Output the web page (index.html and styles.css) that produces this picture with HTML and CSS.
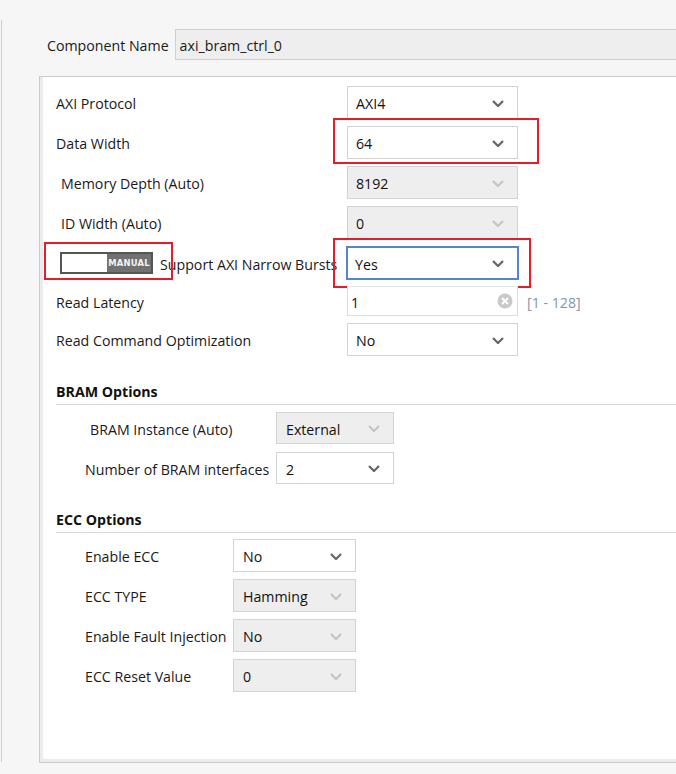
FILE: index.html
```html
<!DOCTYPE html>
<html>
<head>
<meta charset="utf-8">
<link rel="stylesheet" href="styles.css">
</head>
<body>
<div class="frame">
  <div class="name-row">
    <span class="name-label">Component Name</span>
    <div class="name-input">axi_bram_ctrl_0</div>
  </div>
  <div class="panel">
    <div class="panel-inner">
      <div class="rows main">
        <div class="row">
          <span class="lbl">AXI Protocol</span>
          <div class="sel"><span>AXI4</span><svg class="chev" viewBox="0 0 12 7"><polyline points="1,1 6,6 11,1"/></svg></div>
        </div>
        <div class="row">
          <span class="lbl">Data Width</span>
          <div class="sel"><span>64</span><svg class="chev" viewBox="0 0 12 7"><polyline points="1,1 6,6 11,1"/></svg></div>
          <div class="mark mark-data"></div>
        </div>
        <div class="row">
          <span class="lbl indent">Memory Depth (Auto)</span>
          <div class="sel disabled"><span>8192</span><svg class="chev" viewBox="0 0 12 7"><polyline points="1,1 6,6 11,1"/></svg></div>
        </div>
        <div class="row">
          <span class="lbl indent">ID Width (Auto)</span>
          <div class="sel disabled"><span>0</span><svg class="chev" viewBox="0 0 12 7"><polyline points="1,1 6,6 11,1"/></svg></div>
        </div>
        <div class="row">
          <span class="lbl toggle-lbl">
            <span class="toggle"><span class="toggle-off"></span><span class="toggle-on">MANUAL</span></span>
            <span>Support AXI Narrow Bursts</span>
          </span>
          <div class="sel focused"><span>Yes</span><svg class="chev" viewBox="0 0 12 7"><polyline points="1,1 6,6 11,1"/></svg></div>
          <div class="mark mark-toggle"></div>
          <div class="mark mark-yes"></div>
        </div>
        <div class="row row-input">
          <span class="lbl">Read Latency</span>
          <div class="txt"><span>1</span><svg class="clear" viewBox="0 0 16 16"><circle cx="8" cy="8" r="7.5"/><path d="M5 5 L11 11 M11 5 L5 11"/></svg></div>
          <span class="range">[1 - 128]</span>
        </div>
        <div class="row">
          <span class="lbl">Read Command Optimization</span>
          <div class="sel"><span>No</span><svg class="chev" viewBox="0 0 12 7"><polyline points="1,1 6,6 11,1"/></svg></div>
        </div>
      </div>

      <div class="section bram">
        <div class="sec-title">BRAM Options</div>
        <div class="rows sec-rows">
          <div class="row">
            <span class="lbl lbl-deep">BRAM Instance (Auto)</span>
            <div class="sel disabled"><span>External</span><svg class="chev" viewBox="0 0 12 7"><polyline points="1,1 6,6 11,1"/></svg></div>
          </div>
          <div class="row">
            <span class="lbl lbl-sub">Number of BRAM interfaces</span>
            <div class="sel"><span>2</span><svg class="chev" viewBox="0 0 12 7"><polyline points="1,1 6,6 11,1"/></svg></div>
          </div>
        </div>
      </div>

      <div class="section ecc">
        <div class="sec-title">ECC Options</div>
        <div class="rows sec-rows">
          <div class="row">
            <span class="lbl lbl-sub">Enable ECC</span>
            <div class="sel"><span>No</span><svg class="chev" viewBox="0 0 12 7"><polyline points="1,1 6,6 11,1"/></svg></div>
          </div>
          <div class="row">
            <span class="lbl lbl-sub">ECC TYPE</span>
            <div class="sel disabled"><span>Hamming</span><svg class="chev" viewBox="0 0 12 7"><polyline points="1,1 6,6 11,1"/></svg></div>
          </div>
          <div class="row">
            <span class="lbl lbl-sub">Enable Fault Injection</span>
            <div class="sel disabled"><span>No</span><svg class="chev" viewBox="0 0 12 7"><polyline points="1,1 6,6 11,1"/></svg></div>
          </div>
          <div class="row">
            <span class="lbl lbl-sub">ECC Reset Value</span>
            <div class="sel disabled"><span>0</span><svg class="chev" viewBox="0 0 12 7"><polyline points="1,1 6,6 11,1"/></svg></div>
          </div>
        </div>
      </div>
    </div>
  </div>
</div>
</body>
</html>
```
FILE: styles.css
```css
* { box-sizing: border-box; }
html, body {
  margin: 0;
  padding: 0;
  width: 676px;
  height: 774px;
  overflow: hidden;
  background: #f6f6f6;
  font-family: "Open Sans", "Noto Sans", sans-serif;
  font-size: 14.2px;
  color: #1a1a1a;
}
.frame {
  margin: 20px 0 0 1px;
  height: 742px;
  border-left: 1px solid #cdcdcd;
}
.name-row {
  display: flex;
  align-items: center;
  padding: 9px 0 0 45px;
  gap: 6px;
}
.name-label { white-space: nowrap; padding-top: 2px; }
.name-input {
  flex: 1;
  margin-right: -20px;
  height: 31px;
  line-height: 29px;
  padding: 1px 0 0 4px;
  background: #eeeeee;
  border: 1px solid #d0d0d0;
}
.panel {
  margin: 16px -20px 0 37px;
  height: 687px;
  border: 1px solid #cbcbcb;
  background: #ececec;
  padding: 0 0 3px 3px;
}
.panel-inner {
  background: #ffffff;
  height: 100%;
  padding: 9px 0 0 13px;
}
.rows {
  display: flex;
  flex-direction: column;
  gap: 7px;
}
.row {
  position: relative;
  display: grid;
  align-items: center;
  height: 33px;
}
.main .row { grid-template-columns: 291px 171px auto; }
.lbl { white-space: nowrap; padding-top: 2px; }
.lbl.indent { padding-left: 5px; }
.toggle-lbl {
  display: flex;
  align-items: center;
  gap: 7px;
  padding-left: 4px;
  padding-top: 0;
}
.toggle-lbl > span:last-child { padding-top: 2px; }
.toggle {
  display: flex;
  width: 93px;
  height: 22px;
  border: 2px solid #555555;
  background: #fff;
}
.toggle-off { width: 45px; background: #fff; }
.toggle-on {
  flex: 1;
  background: #717171;
  color: #f4f4f4;
  font-family: "DejaVu Sans", sans-serif;
  font-weight: bold;
  font-size: 8.4px;
  letter-spacing: 0.2px;
  display: flex;
  align-items: center;
  justify-content: center;
}
.sel {
  position: relative;
  height: 100%;
  display: flex;
  align-items: center;
  padding: 2px 0 0 8px;
  background: #ffffff;
  border: 1px solid #d3d3d3;
  color: #111;
}
.sel.disabled { background: #eeeeee; }
.sel.focused {
  border: 2px solid #5683d2;
  padding-left: 7px;
  margin: 0 -1px;
  height: 34px;
}
.chev {
  position: absolute;
  right: 13px;
  top: 50%;
  width: 12px;
  height: 7px;
  margin-top: -3px;
  fill: none;
  stroke: #666666;
  stroke-width: 2.2;
}
.sel.disabled .chev { stroke: #c4c4c4; }
.row-input { height: 30px; }
.txt {
  position: relative;
  height: 100%;
  display: flex;
  align-items: center;
  padding: 2px 0 0 3px;
  border: 1px solid #dcdcdc;
  border-top-color: #e8e8e8;
  background: #fff;
  color: #111;
}
.clear {
  position: absolute;
  right: 4px;
  top: 50%;
  margin-top: -8px;
  width: 16px;
  height: 16px;
}
.clear circle { fill: #c9c9c9; }
.clear path { stroke: #ffffff; stroke-width: 2; fill: none; }
.range {
  padding: 2px 0 0 9px;
  color: #8596ab;
  white-space: nowrap;
}
.mark {
  position: absolute;
  border: 2px solid #e31e2a;
  pointer-events: none;
}
.mark-data { left: 277px; top: -8px; width: 206px; height: 46px; }
.mark-toggle { left: -12px; top: -4px; width: 129px; height: 38px; }
.mark-yes { left: 277px; top: -8px; width: 198px; height: 50px; }

.section { margin-top: 25px; }
.sec-title {
  font-weight: bold;
  line-height: 20px;
  padding: 1px 0 2px;
  border-bottom: 1px solid #d9d9d9;
  color: #111;
}
.bram .sec-rows { margin-top: 7px; gap: 8px; }
.bram .row { grid-template-columns: 220px 118px; height: 32px; }
.lbl-deep { padding-left: 34px; }
.lbl-sub { padding-left: 29px; }
.ecc .sec-rows { margin-top: 6px; }
.ecc .row { grid-template-columns: 177px 123px; }
.bram .sel, .ecc .sel { padding-left: 9px; }
```
